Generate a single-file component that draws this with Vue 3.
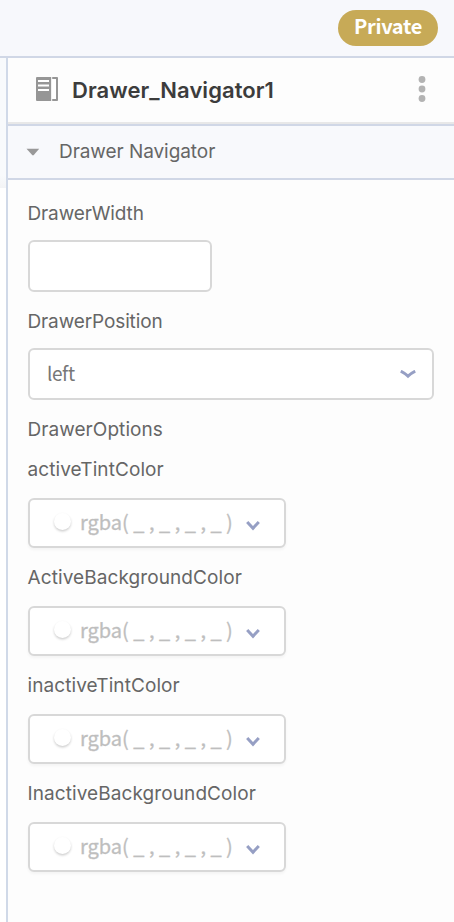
<script setup>
const colorFields = ['activeTintColor', 'ActiveBackgroundColor', 'inactiveTintColor', 'InactiveBackgroundColor']
</script>

<template>
  <div class="screen">
    <header class="topbar"><span class="badge">Private</span></header>
    <div class="main">
      <div class="gutter"></div>
      <section class="panel">
        <div class="heading">
          <svg class="doc" width="22" height="24" viewBox="0 0 22 24">
            <path fill="#969696" d="M0 1Q0 0 1 0H15.2V24H1Q0 24 0 23ZM16.2 0H21.2Q22 0 22 1V23Q22 24 21.2 24H16.2V22H20V2H16.2Z" />
            <path fill="#fff" d="M2 3H13V5H2ZM2 7.5H13V9.6H2ZM2 12H13V14H2ZM15.6 2H20V22H15.6Z" />
          </svg>
          <h1>Drawer_Navigator1</h1>
          <svg class="dots" width="8" height="26" viewBox="0 0 8 26" fill="#b3b3b3">
            <circle cx="4" cy="3.5" r="3.4" /><circle cx="4" cy="13" r="3.4" /><circle cx="4" cy="22.5" r="3.4" />
          </svg>
        </div>
        <div class="group">
          <svg width="14" height="8" viewBox="0 0 14 8"><path d="M.5.8H13.2L7.8 7Q7 7.8 6.2 7Z" fill="#999" /></svg>
          <span class="group-name">Drawer Navigator</span>
        </div>
        <div class="fields">
          <div class="label tight">DrawerWidth</div>
          <div class="input"></div>
          <div class="label tight">DrawerPosition</div>
          <div class="select">
            <span class="value">left</span>
            <svg width="16" height="9" viewBox="0 0 16 9"><path d="M.8 1.2Q4.5 3 8 6.2Q11.5 3 15.2 1.2" fill="none" stroke="#969fc4" stroke-width="3" /></svg>
          </div>
          <div class="label options">DrawerOptions</div>
          <div v-for="name in colorFields" :key="name" class="color-field">
            <div class="label loose">{{ name }}</div>
            <div class="color">
              <i class="swatch"></i>
              <span class="rgba">rgba( _ , _ , _ , _ )</span>
              <svg width="14" height="11" viewBox="0 0 14 11"><path d="M1.2 2L7 8.2L12.8 2" fill="none" stroke="#969fc4" stroke-width="3" /></svg>
            </div>
          </div>
        </div>
      </section>
    </div>
  </div>
</template>

<style>
body { margin: 0; background: #fff; }
</style>

<style scoped>
* { box-sizing: border-box; }
.screen { width: 454px; height: 922px; display: flex; flex-direction: column; overflow: hidden; font-family: Inter, sans-serif; color: #666; }
.topbar { height: 58px; flex: none; padding: 10px 16px 0 0; display: flex; justify-content: flex-end; align-items: flex-start; background: #f7f8fc; border-bottom: 2px solid #d0d7e6; }
.badge { width: 100px; height: 36px; border-radius: 18px; background: #c7aa57; color: #fff; text-align: center; font: 700 20px/32px "Noto Sans CJK SC", sans-serif; letter-spacing: -.35px; white-space: nowrap; }
.main { flex: 1; display: flex; }
.gutter { width: 6px; height: 130px; background: linear-gradient(#f8fafc 90%, #f3f4f6); }
.panel { flex: 1; min-width: 0; border-left: 2px solid #d0d9e8; background: #fdfdfd; }
.heading { height: 66px; padding: 0 28px; display: flex; align-items: center; border-bottom: 2px solid #e8e8e8; }
.doc { margin-top: -2px; }
h1 { margin: 0 0 0 14px; font-size: 22px; line-height: 30px; font-weight: 600; color: #3c3c3c; letter-spacing: .05px; white-space: nowrap; }
.dots { margin-left: auto; margin-top: -2px; }
.group { height: 56px; padding-left: 18px; display: flex; align-items: center; background: #f8f9fc; border-top: 2px solid #d0d7e6; border-bottom: 2px solid #d0d7e6; }
.group-name { margin-left: 19px; font-size: 19px; line-height: 24px; letter-spacing: -.06px; }
.fields { padding: 22px 20px 0; }
.label { height: 24px; margin-left: -.5px; font-size: 19px; line-height: 24px; white-space: nowrap; }
.tight { letter-spacing: -.12px; }
.loose { letter-spacing: .09px; }
.options { margin-bottom: 16px; letter-spacing: .06px; }
.input, .select, .color { border: 2px solid #d8d8d8; border-radius: 6px; background: #fff; display: flex; align-items: center; }
.input { width: 184px; height: 52px; margin: 14px 0 18px; }
.select { height: 52px; margin: 14px 0 18px; padding: 0 16px 0 17px; justify-content: space-between; }
.value { margin-top: -3px; font: 400 19px/24px "Noto Sans CJK SC", sans-serif; letter-spacing: -.4px; color: #777; }
.color { width: 258px; height: 50px; margin: 16px 0 18px; padding-left: 24px; box-shadow: 0 2px 3px rgba(0, 0, 0, .04); }
.color-field:last-child .color { margin-bottom: 0; }
.swatch { width: 17px; height: 17px; border-radius: 50%; background: #fff; box-shadow: 0 1.5px 2.5px rgba(0, 0, 0, .2); margin-top: -3px; }
.rgba { width: 156px; margin: -2px 0 0 9px; font: 400 20px/24px "Noto Sans CJK SC", sans-serif; color: #bebebe; -webkit-text-stroke: .3px #bebebe; white-space: pre; }
.color svg { margin-left: 10px; margin-top: 4px; }
</style>
